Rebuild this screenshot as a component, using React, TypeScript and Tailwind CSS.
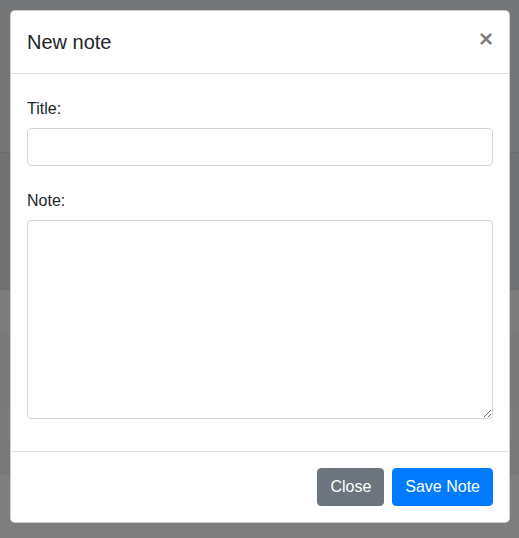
import { useState } from "react"

const font = { fontFamily: '"Liberation Sans", Arial, sans-serif' }

function Backdrop() {
  // page content seen through the dark modal backdrop
  return (
    <div className="flex flex-col w-full h-[538px]">
      <div className="h-[152px] bg-[#747576]" />
      <div className="h-px bg-[#6a6b6c]" />
      <div className="h-[137px] bg-[#707172]" />
      <div className="h-[40px] bg-[#7c7c7c]" />
      <div className="h-[80px] bg-[#797979]" />
      <div className="h-[30px] bg-[#7b7b7b]" />
      <div className="h-[35px] bg-[#787878]" />
      <div className="flex-1 bg-[#7e7e7e]" />
    </div>
  )
}

export default function App() {
  const [title, setTitle] = useState("")
  const [note, setNote] = useState("")

  return (
    <div className="relative w-[519px] h-[538px] overflow-hidden" style={font}>
      <Backdrop />

      {/* Modal dialog */}
      <div className="absolute left-[10px] top-[10px] w-[500px] bg-white border border-black/20 rounded-[5px] text-[#212529]">
        {/* Header */}
        <div className="flex items-start justify-between p-4 border-b border-[#dee2e6]">
          <h5 className="text-[20px] leading-[30px] font-normal">New note</h5>
          <button
            className="-my-4 -mr-4 p-4 text-[24px] leading-none font-bold text-black/50"
            style={{ textShadow: "0 1px 0 #fff" }}
            aria-label="Close"
          >
            ×
          </button>
        </div>

        {/* Body */}
        <div className="p-4">
          <div className="mb-4">
            <label className="block py-[7px] text-[16px] leading-[24px]">Title:</label>
            <input
              type="text"
              value={title}
              onChange={(e) => setTitle(e.target.value)}
              className="block w-full h-[38px] px-3 py-1.5 text-[16px] border border-[#ced4da] rounded outline-none"
            />
          </div>
          <div className="mb-4">
            <label className="block py-[7px] text-[16px] leading-[24px]">Note:</label>
            <textarea
              value={note}
              onChange={(e) => setNote(e.target.value)}
              className="block w-full h-[199px] px-3 py-1.5 text-[16px] border border-[#ced4da] rounded outline-none resize-y"
            />
          </div>
        </div>

        {/* Footer */}
        <div className="flex items-center justify-end gap-2 p-4 border-t border-[#dee2e6]">
          <button className="h-[38px] px-3 text-[16px] leading-[24px] text-white bg-[#6c757d] border border-[#6c757d] rounded">
            Close
          </button>
          <button className="h-[38px] px-3 text-[16px] leading-[24px] text-white bg-[#007bff] border border-[#007bff] rounded">
            Save Note
          </button>
        </div>
      </div>
    </div>
  )
}
